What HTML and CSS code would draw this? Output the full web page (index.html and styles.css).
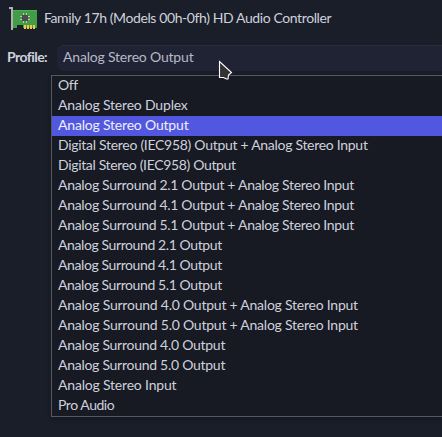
FILE: index.html
```
<!DOCTYPE html>
<html lang="en">
<head>
    <meta charset="UTF-8">
    <meta name="viewport" content="width=device-width, initial-scale=1">
    <title>Audio Profile</title>
    <link rel="stylesheet" href="styles.css">
</head>
<body>

<div class="device">
    <svg class="card-icon" width="28" height="23" viewBox="0 0 28 23" shape-rendering="crispEdges">
        <path d="M4 3h24v18H14v-3H8v3H4z" fill="#429e46"/>
        <path d="M4 3h24v1H4z" fill="#4caf50"/>
        <path d="M0 0h4v23H2V2H0z" fill="#b0b0b4"/>
        <path d="M14 6h1v2h-1zM17 6h1v2h-1zM14 14h1v2h-1zM17 14h1v2h-1zM11 9h2v1h-2zM11 12h2v1h-2zM19 9h2v1h-2zM19 12h2v1h-2z" fill="#b9c9b9"/>
        <rect x="13" y="8" width="6" height="6" fill="#4d4d4d"/>
        <path d="M15 18h2v4h-2zM18 18h2v4h-2zM21 18h2v4h-2zM24 18h2v4h-2z" fill="#f7c548"/>
    </svg>
    <span class="device-name">Family 17h (Models 00h-0fh) HD Audio Controller</span>
</div>

<div class="profile">
    <span class="profile-label">Profile:</span>
    <div class="combo"><span>Analog Stereo Output</span></div>
</div>

<ul class="options">
    <li class="short"><span>Off</span></li>
    <li><span>Analog Stereo Duplex</span></li>
    <li class="selected"><span>Analog Stereo Output</span></li>
    <li class="digital-duplex"><span>Digital Stereo (IEC958) Output + Analog Stereo Input</span></li>
    <li class="digital"><span>Digital Stereo (IEC958) Output</span></li>
    <li class="sub-duplex"><span>Analog Surround 2.1 Output + Analog Stereo Input</span></li>
    <li class="sub-duplex"><span>Analog Surround 4.1 Output + Analog Stereo Input</span></li>
    <li class="sub-duplex"><span>Analog Surround 5.1 Output + Analog Stereo Input</span></li>
    <li class="sub"><span>Analog Surround 2.1 Output</span></li>
    <li class="sub"><span>Analog Surround 4.1 Output</span></li>
    <li class="sub"><span>Analog Surround 5.1 Output</span></li>
    <li class="quad-duplex"><span>Analog Surround 4.0 Output + Analog Stereo Input</span></li>
    <li class="quad-duplex"><span>Analog Surround 5.0 Output + Analog Stereo Input</span></li>
    <li class="quad"><span>Analog Surround 4.0 Output</span></li>
    <li class="quad"><span>Analog Surround 5.0 Output</span></li>
    <li><span>Analog Stereo Input</span></li>
    <li class="short"><span>Pro Audio</span></li>
</ul>

<!-- Mouse pointer -->
<svg class="pointer" width="15" height="20" viewBox="0 0 15 20">
    <path d="M1.500 1.500v16h4l3 1.500h1.500l.5-4 3-2.500z" fill="#333" stroke="#fff" stroke-width="1.100"/>
</svg>

</body>
</html>
```
FILE: styles.css
```
body {
    font-family: Lato, "Open Sans", sans-serif;
    font-size: 14px;
    letter-spacing: -0.19px;
    line-height: 20px;
    color: #ced1dc;
    background-color: #1a1e29;
    margin: 0;
    height: 437px;
    overflow: hidden;
    white-space: nowrap;
}

.device {
    display: flex;
    align-items: center;
    height: 37px;
    padding-left: 9px;
}

.device-name {
    padding-bottom: 2px;
    letter-spacing: -0.4px;
}

.card-icon {
    margin-right: 7px;
}

.profile {
    display: flex;
    align-items: center;
    height: 26px;
    margin-top: 8px;
    padding-left: 7px;
}

.profile-label {
    width: 50px;
    padding-bottom: 2px;
    font-weight: bold;
    letter-spacing: -0.55px;
}

.combo {
    flex: 1;
    box-sizing: border-box;
    height: 26px;
    padding: 1px 6px;
    color: #b6b9c6;
    background-color: #202334;
    border-top: 1px solid #292c3c;
    border-radius: 7px 0 0 7px;
}

.options {
    list-style: none;
    margin: 4px 0 0 51px;
    padding: 0;
    background-color: #171923;
    border: 1px solid #565862;
    border-right: none;
    box-shadow: 0 2px 5px rgba(0, 0, 0, 0.3);
}

.options li {
    height: 20px;
    line-height: 18px;
    padding-left: 6px;
}

.options .selected {
    color: #eeeffa;
    background-color: #5257df;
}

.short {
    letter-spacing: -0.46px;
}

.digital-duplex {
    letter-spacing: -0.29px;
}

.digital {
    letter-spacing: -0.34px;
}

.sub-duplex {
    letter-spacing: -0.31px;
}

.sub {
    letter-spacing: -0.4px;
}

.quad-duplex {
    letter-spacing: -0.23px;
}

.quad {
    letter-spacing: -0.27px;
}

.pointer {
    position: absolute;
    left: 218px;
    top: 60px;
}
```
